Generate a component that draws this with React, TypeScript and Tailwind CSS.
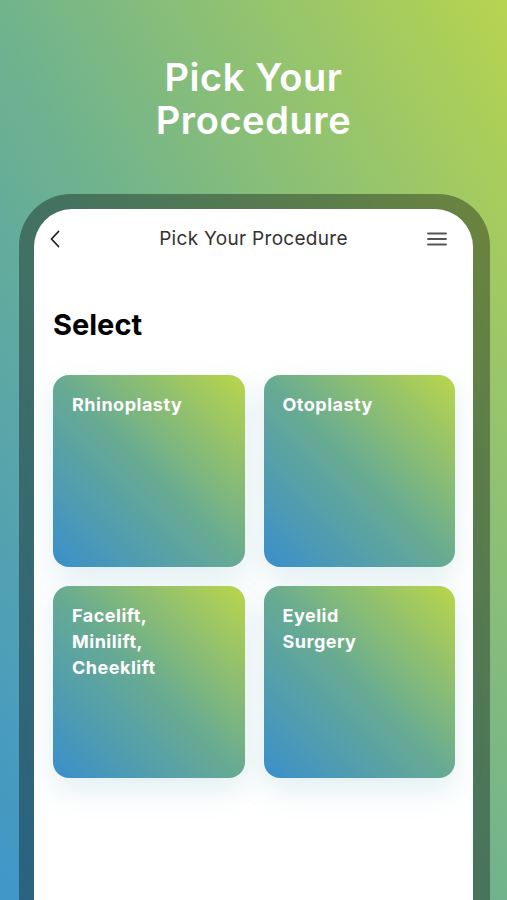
import React from "react";

const cards = ["Rhinoplasty", "Otoplasty", "Facelift,\nMinilift,\nCheeklift", "Eyelid\nSurgery"];

export default function App() {
  return (
    <div
      className="w-full h-[900px] overflow-hidden flex flex-col bg-[linear-gradient(to_top_right,#3f96c9_0%,#6eb28f_48%,#b7d44f_100%)]"
      style={{ fontFamily: "Inter, 'Open Sans', sans-serif" }}
    >
      <h1 className="pt-[56px] text-center text-white font-semibold text-[38px] leading-[43px] tracking-[0.6px]">
        Pick Your
        <br />
        Procedure
      </h1>
      <div className="mt-[52px] ml-[19px] mr-[17px] flex-1 rounded-t-[52px] bg-black/35 pl-[15px] pr-[17px] pt-[15px]">
        <div className="h-full rounded-t-[38px] bg-white">
          <div className="grid grid-cols-[1fr_auto_1fr] items-center pt-[18px] h-[42px] px-[16px]">
            <svg width="10" height="18" viewBox="0 0 10 18">
              <path d="M8.5 1.5 L1.5 9 L8.5 16.5" fill="none" stroke="#222" strokeWidth="1.8" strokeLinecap="round" strokeLinejoin="round" />
            </svg>
            <div className="text-[19px] text-[#333] font-normal leading-[24px] tracking-[0.3px]">Pick Your Procedure</div>
            <div className="flex justify-end pr-[10px]">
              <svg width="20" height="14" viewBox="0 0 20 14">
                <path d="M1 1.5 H19 M1 7 H19 M1 12.5 H19" stroke="#555" strokeWidth="1.8" strokeLinecap="round" />
              </svg>
            </div>
          </div>
          <div className="mt-[57px] pl-[19px] text-[29px] leading-[34px] font-bold text-black">Select</div>
          <div className="mt-[33px] pl-[19px] pr-[18px] grid grid-cols-2 gap-[19px]">
            {cards.map((c) => (
              <div
                key={c}
                className="h-[192px] rounded-[16px] px-[19px] pt-[17px] shadow-[0_12px_30px_rgba(70,150,170,0.16)] bg-[linear-gradient(to_top_right,#3a8fcb_0%,#68ab92_50%,#bad64a_100%)]"
              >
                <div className="text-white font-bold text-[18px] leading-[26px] tracking-[0.5px] whitespace-pre-line">{c}</div>
              </div>
            ))}
          </div>
        </div>
      </div>
    </div>
  );
}
